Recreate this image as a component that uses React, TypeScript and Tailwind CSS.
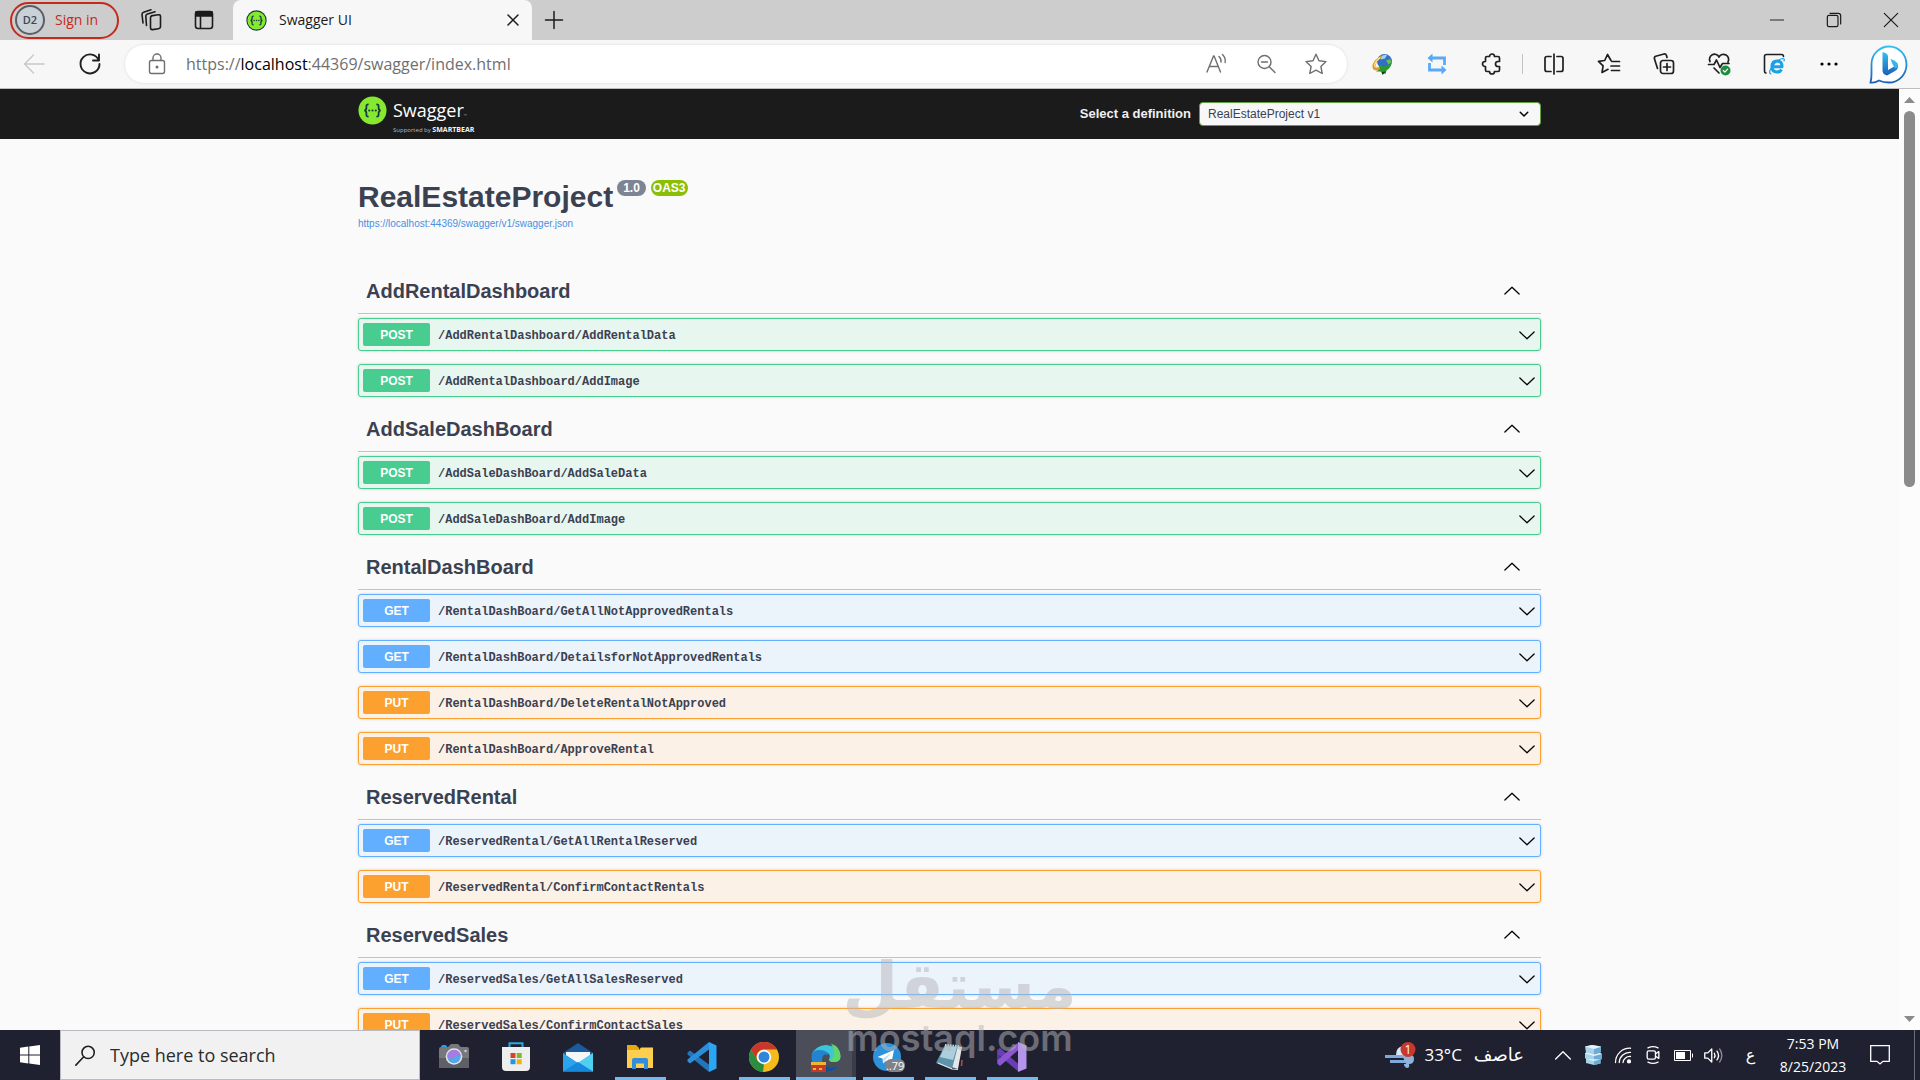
import { useState } from 'react'
import type { ReactNode } from 'react'
import clsx from 'clsx'

type Method = 'GET' | 'POST' | 'PUT'

interface Operation {
  method: Method
  path: string
}

interface Tag {
  name: string
  operations: Operation[]
}

const tags: Tag[] = [
  {
    name: 'AddRentalDashboard',
    operations: [
      { method: 'POST', path: '/AddRentalDashboard/AddRentalData' },
      { method: 'POST', path: '/AddRentalDashboard/AddImage' },
    ],
  },
  {
    name: 'AddSaleDashBoard',
    operations: [
      { method: 'POST', path: '/AddSaleDashBoard/AddSaleData' },
      { method: 'POST', path: '/AddSaleDashBoard/AddImage' },
    ],
  },
  {
    name: 'RentalDashBoard',
    operations: [
      { method: 'GET', path: '/RentalDashBoard/GetAllNotApprovedRentals' },
      { method: 'GET', path: '/RentalDashBoard/DetailsforNotApprovedRentals' },
      { method: 'PUT', path: '/RentalDashBoard/DeleteRentalNotApproved' },
      { method: 'PUT', path: '/RentalDashBoard/ApproveRental' },
    ],
  },
  {
    name: 'ReservedRental',
    operations: [
      { method: 'GET', path: '/ReservedRental/GetAllRentalReserved' },
      { method: 'PUT', path: '/ReservedRental/ConfirmContactRentals' },
    ],
  },
  {
    name: 'ReservedSales',
    operations: [
      { method: 'GET', path: '/ReservedSales/GetAllSalesReserved' },
      { method: 'PUT', path: '/ReservedSales/ConfirmContactSales' },
    ],
  },
]

const rowStyles: Record<Method, string> = {
  GET: 'border-[#61affe] bg-[#ebf3fb]',
  POST: 'border-[#49cc90] bg-[#e8f6f0]',
  PUT: 'border-[#fca130] bg-[#fbf1e6]',
}

const badgeStyles: Record<Method, string> = {
  GET: 'bg-[#61affe]',
  POST: 'bg-[#49cc90]',
  PUT: 'bg-[#fca130]',
}

function Icon({ size = 24, width = 1.4, className, children }: { size?: number; width?: number; className?: string; children: ReactNode }) {
  return (
    <svg
      width={size}
      height={size}
      viewBox="0 0 24 24"
      fill="none"
      stroke="currentColor"
      strokeWidth={width}
      strokeLinecap="round"
      strokeLinejoin="round"
      className={clsx('shrink-0', className)}
      aria-hidden="true"
    >
      {children}
    </svg>
  )
}

function SwaggerMark({ size, ring }: { size: number; ring?: boolean }) {
  return (
    <svg width={size} height={size} viewBox="0 0 30 30" fill="none" className="shrink-0" aria-hidden="true">
      <circle cx="15" cy="15" r="14.5" fill={ring ? '#173647' : '#85ea2d'} />
      {ring && <circle cx="15" cy="15" r="13" fill="#85ea2d" />}
      <path d="M11 8.6C8.8 8.6 8.6 9.6 8.7 11.4C8.9 13.8 8.4 14.8 6.6 15C8.4 15.2 8.9 16.2 8.7 18.6C8.6 20.4 8.8 21.4 11 21.4" stroke="#173647" strokeWidth="1.8" />
      <path d="M19 8.6C21.2 8.6 21.4 9.6 21.3 11.4C21.1 13.8 21.6 14.8 23.4 15C21.6 15.2 21.1 16.2 21.3 18.6C21.4 20.4 21.2 21.4 19 21.4" stroke="#173647" strokeWidth="1.8" />
      <circle cx="11.6" cy="15" r="1.1" fill="#173647" />
      <circle cx="15" cy="15" r="1.1" fill="#173647" />
      <circle cx="18.4" cy="15" r="1.1" fill="#173647" />
    </svg>
  )
}

function TitleBar() {
  return (
    <div className="flex h-10 shrink-0 items-stretch bg-[#cdcdcd] text-[#1b1b1b]">
      <div className="flex w-[233px] shrink-0 items-center pl-2.5">
        <button className="flex h-[37px] w-[109px] items-center rounded-full border-2 border-[#c42b1c] pl-[3px] text-sm text-[#c42b1c]">
          <span className="mr-2.5 flex size-[30px] shrink-0 items-center justify-center rounded-full border-2 border-[#5a5f66] bg-[#c9d0d6] text-[11px] font-semibold text-[#3c4650]">
            D2
          </span>
          Sign in
        </button>
        <button aria-label="Workspaces" className="ml-[20px]">
          <Icon width={1.6}>
            <rect x="11.5" y="7.5" width="10" height="14" rx="2" transform="skewY(-8) translate(0 2)" />
            <path d="M7.5 17.5L6.8 8.2C6.7 7 7.3 6.4 8.5 6L16 3.8" />
            <path d="M4 15L3 6.5C2.9 5.2 3.4 4.6 4.6 4.2L12 1.8" />
          </Icon>
        </button>
        <button aria-label="Tab actions" className="ml-[29px]">
          <Icon width={1.6}>
            <rect x="3.5" y="3.5" width="17" height="17" rx="2.5" />
            <path d="M4 4h16v4H4z" fill="currentColor" />
            <path d="M8.5 8v12" />
          </Icon>
        </button>
      </div>
      <div className="flex w-[299px] shrink-0 items-center rounded-t-lg bg-[#f7f7f7] pr-[9px] pl-[13px]">
        <SwaggerMark size={21} ring />
        <span className="ml-3 grow text-sm">Swagger UI</span>
        <button aria-label="Close tab">
          <Icon size={20} width={1.8}>
            <path d="M6 6l12 12M18 6L6 18" />
          </Icon>
        </button>
      </div>
      <button aria-label="New tab" className="ml-2.5">
        <Icon width={1.5}>
          <path d="M12 3.5v17M3.5 12h17" />
        </Icon>
      </button>
      <div className="ml-auto flex">
        <button aria-label="Minimize" className="flex w-[57px] items-center justify-center">
          <Icon size={16}>
            <path d="M2 12h20" />
          </Icon>
        </button>
        <button aria-label="Restore" className="flex w-[57px] items-center justify-center">
          <Icon size={16} width={1.8}>
            <rect x="2" y="5" width="16" height="17" rx="2.5" />
            <path d="M6 2h12.5Q22 2 22 5.500V18" />
          </Icon>
        </button>
        <button aria-label="Close" className="flex w-[58px] items-center justify-center">
          <Icon size={16} width={1.8}>
            <path d="M2 2l20 20M22 2L2 22" />
          </Icon>
        </button>
      </div>
    </div>
  )
}

function ToolButton({ label, children }: { label: string; children: ReactNode }) {
  return (
    <button aria-label={label} className="flex w-[55px] shrink-0 items-center justify-center">
      {children}
    </button>
  )
}

function AddressBar() {
  return (
    <div className="flex h-[49px] shrink-0 items-center border-b border-[#bdbdbd] bg-[#f7f7f7] text-[#1f1f1f]">
      <button aria-label="Back" className="ml-[22px] text-[#c8c8c8]">
        <Icon width={1.5}>
          <path d="M22 12H2.500M11.500 3L2.500 12l9 9" />
        </Icon>
      </button>
      <button aria-label="Refresh" className="ml-8">
        <Icon width={1.9}>
          <path d="M20.800 8.300A9.500 9.500 0 1 0 21.500 12M21 2.500v6h-6" />
        </Icon>
      </button>
      <div className="ml-[23px] flex h-[38px] grow items-center rounded-full bg-white pr-[19px] pl-5 text-[#6f6f6f] shadow-[0_0_3px_rgba(0,0,0,0.12)]">
        <Icon>
          <rect x="4.500" y="8.500" width="15" height="13" rx="2" />
          <path d="M8 8.500V6a4 4 0 0 1 8 0v2.500" />
          <circle cx="12" cy="15" r="0.8" fill="currentColor" />
        </Icon>
        <div className="relative ml-[17px] grow text-base">
          <span aria-hidden="true">
            https://<span className="text-black">localhost</span>:44369/swagger/index.html
          </span>
          <input
            aria-label="Address"
            className="absolute inset-0 w-full bg-transparent text-transparent outline-none"
            defaultValue="https://localhost:44369/swagger/index.html"
          />
        </div>
        <div className="flex gap-[26px]">
          <button aria-label="Read aloud">
            <Icon>
              <path d="M3 20L9.500 4h.6L16.500 20M5.500 14.500h9M15 4.500c1.700 1.500 2.300 3.300 2 5.500M18.500 2.500c2.300 2.300 3.200 5 2.600 8" />
            </Icon>
          </button>
          <button aria-label="Zoom out">
            <Icon>
              <circle cx="10.500" cy="10" r="6.500" />
              <path d="M15.500 15L21 20.500M7.500 10h6" />
            </Icon>
          </button>
          <button aria-label="Add to favorites">
            <Icon>
              <path d="M12 2.200l3 6.500 7 .9-5.100 4.900 1.300 7-6.200-3.400-6.200 3.400 1.300-7L2 9.600l7-.9z" />
            </Icon>
          </button>
        </div>
      </div>
      <div className="ml-[7px] flex h-full items-center">
        <ToolButton label="Download manager">
          <svg width="22" height="22" viewBox="0 0 22 22" aria-hidden="true">
            <circle cx="13.500" cy="8.500" r="7.500" fill="#2f6fc4" />
            <path d="M9 4.500q3-3.500 7-2.500l-2 3.500-4 1z" fill="#a9cff0" />
            <path d="M15 7.500l4-1.500 1.500 3-3 2.500z" fill="#6cc04a" />
            <path d="M10.500 2.500Q3.500 6 1.500 12q-1 5 4 5.500 3 0 6-1l-1-3q-6 2-6-1 1-5 6.500-8z" fill="#e8982a" />
            <path d="M9 4.500Q4.500 8 3.500 12q0 2.500 3 2" fill="none" stroke="#fbe08a" strokeWidth="1.200" />
            <path d="M8 11.500l4.500 2Q17 13.500 20.500 10q-.5 5-5 7.500l-1 3.500-5.500-2.500H5l4-2.500z" fill="#2f9a2c" />
            <path d="M10.500 19l4.500-.5-3.500 3.500z" fill="#123d12" />
          </svg>
        </ToolButton>
        <ToolButton label="Sync extension">
          <svg width="20" height="22" viewBox="0 0 20 22" fill="none" stroke="#5aa9f7" strokeWidth="2.800" aria-hidden="true">
            <path d="M4 5h13.500v7M2.500 10v7H16" />
            <path d="M5.500.500v9L.5 5zM14.500 12.500v9l5-4.500z" fill="#5aa9f7" stroke="none" />
          </svg>
        </ToolButton>
        <ToolButton label="Extensions">
          <Icon width={1.7}>
            <path d="M9.500 4.500a2.500 2.500 0 0 1 5 0H18q1.500 0 1.500 1.500v3.500H18a2.500 2.500 0 0 0 0 5h1.500V18q0 1.500-1.500 1.500h-3.500a2.500 2.500 0 0 1-5 0H7q-1.500 0-1.500-1.500v-3.500H5a2.500 2.500 0 0 1 0-5h.5V6q0-1.500 1.500-1.500z" />
          </Icon>
        </ToolButton>
        <div className="mr-[3px] ml-[3px] h-5 w-px bg-[#c4c4c4]" />
        <ToolButton label="Split screen">
          <Icon width={1.7}>
            <path d="M9 4.500H5Q3 4.500 3 6.500v11q0 2 2 2h4M15 4.500h4q2 0 2 2v11q0 2-2 2h-4M12 2v20" />
          </Icon>
        </ToolButton>
        <ToolButton label="Favorites">
          <Icon width={1.7}>
            <path d="M14 8.500L10.500 2.500 7.700 8.500 1.500 9.400l4.600 4.500L5 20.500l6-3.200M15 9.500h7.500M14 14h8.500M14.500 18.500h8" />
          </Icon>
        </ToolButton>
        <ToolButton label="Collections">
          <Icon width={1.7}>
            <rect x="8.500" y="8.500" width="13" height="13" rx="2.500" />
            <path d="M15 11.500v7M11.500 15h7M5.500 16.500L2.500 7q-.6-2 1.200-2.700L12 2q1.700-.5 2.500 1.500l.5 2" />
          </Icon>
        </ToolButton>
        <ToolButton label="Browser essentials">
          <Icon width={1.7}>
            <path d="M12 21L7 16M3 9.500A5 5 0 0 1 12 5a5 5 0 0 1 9 5M1.500 12.500h5.500l2.500-4.500 3.500 7.500 2.500-4h6.500" />
            <circle cx="18.500" cy="18.500" r="5" fill="#1e8e3e" stroke="none" />
            <path d="M16.300 18.500l1.600 1.600 2.700-3" stroke="#fff" strokeWidth="1.200" />
          </Icon>
        </ToolButton>
        <ToolButton label="Internet Explorer mode">
          <Icon width={1.6}>
            <path d="M4 21Q2.500 21 2.500 18.500V4.500Q2.500 2.500 4.500 2.500h15q2 0 2 2" />
            <path d="M10 14.800h10q0-5.800-5-5.800t-5 5.800q0 5.200 5 5.200 3.200 0 4.500-2.500" stroke="#1ba1e8" strokeWidth="3" strokeLinecap="butt" />
            <path d="M9 22q-3-1 .5-6.500 5-7.500 11-9 2.500 0 1.500 2.500" stroke="#1ba1e8" strokeWidth="1.200" />
          </Icon>
        </ToolButton>
        <ToolButton label="Settings and more">
          <svg width="18" height="4" viewBox="0 0 18 4" aria-hidden="true">
            <circle cx="2" cy="2" r="1.600" />
            <circle cx="9" cy="2" r="1.600" />
            <circle cx="16" cy="2" r="1.600" />
          </svg>
        </ToolButton>
        <button aria-label="Bing" className="mr-3 ml-3">
          <svg width="40" height="40" viewBox="0 0 40 40" fill="none" aria-hidden="true">
            <defs>
              <linearGradient id="bing" x1="0" y1="0" x2="0" y2="1">
                <stop offset="0" stopColor="#35c0f0" />
                <stop offset="1" stopColor="#1b5fb8" />
              </linearGradient>
            </defs>
            <path d="M2.500 38.500Q3.500 35 3.500 30V20A17.500 18 0 1 1 21 38.500Q15 38.500 11 36.500 7 39 2.500 38.500z" fill="#fff" stroke="url(#bing)" strokeWidth="1.800" />
            <path d="M14.500 8q5 1 5.500 4v14l7-4 3-1q.5 4-3 6l-8 4.500q-4.500-1-4.500-5z" fill="url(#bing)" />
            <path d="M22.500 15q7 2.500 7.500 5.500.5 3-3 4-3-4.500-4.500-9.500z" fill="#38b6e8" />
          </svg>
        </button>
      </div>
    </div>
  )
}

function Topbar() {
  return (
    <div className="h-[50px] bg-[#1b1b1b]">
      <div className="mx-auto flex h-full w-[1183px] max-w-full items-center justify-between">
        <a href="#" className="flex items-start pt-0.5 text-white">
          <SwaggerMark size={29} />
          <span className="ml-1.5 flex flex-col font-['Open_Sans',sans-serif]">
            <span className="pt-1 text-lg leading-5">
              Swagger<span className="text-[4px] text-gray-400">™</span>
            </span>
            <span className="text-[6px] leading-2 text-[#b8b8c0]">
              Supported by <b className="text-[7px] text-gray-100">SMARTBEAR</b>
            </span>
          </span>
        </a>
        <label className="flex items-center text-[13px] font-bold text-[#f0f0f0]">
          Select a definition
          <span className="relative ml-2">
            <select className="block h-6 w-[342px] appearance-none rounded-sm border border-[#62a03f] bg-[#f7f7f7] px-2 text-xs leading-5 font-normal text-[#3b4151]">
              <option>RealEstateProject v1</option>
            </select>
            <Icon size={10} width={3.500} className="pointer-events-none absolute top-[7px] right-3 text-black">
              <path d="M3 8l9 9 9-9" />
            </Icon>
          </span>
        </label>
      </div>
    </div>
  )
}

function TagSection({ tag }: { tag: Tag }) {
  const [open, setOpen] = useState(true)

  return (
    <section className="pb-2.5">
      <h3 className="mb-1 border-b border-[#c0c2c6]">
        <button className="flex h-11 w-full items-center justify-between pr-5 pl-2 text-xl font-bold" onClick={() => setOpen(!open)}>
          {tag.name}
          <Icon size={18} width={1.700} className={clsx('text-black', !open && 'rotate-180')}>
            <path d="M2.500 16L12 7l9.500 9" />
          </Icon>
        </button>
      </h3>
      {open && (
        <div className="flex flex-col gap-[13px]">
          {tag.operations.map((op) => (
            <button
              key={op.path}
              className={clsx('flex h-[33px] items-center rounded-[3px] border p-1 shadow-[0_0_3px_rgba(0,0,0,0.19)]', rowStyles[op.method])}
            >
              <span className={clsx('h-[23px] w-[67px] rounded-xs text-center text-xs leading-6 font-bold text-white', badgeStyles[op.method])}>
                {op.method}
              </span>
              <span className="ml-2 grow pt-0.5 text-left font-['Liberation_Mono',monospace] text-xs font-bold">{op.path}</span>
              <Icon size={18} width={1.700} className="text-black">
                <path d="M2.500 8L12 17l9.500-9" />
              </Icon>
            </button>
          ))}
        </div>
      )}
    </section>
  )
}

function SwaggerPage() {
  return (
    <div className="flex min-h-0 grow font-['Liberation_Sans',sans-serif]">
      <main className="min-w-0 grow overflow-hidden bg-[#fafafa] text-[#3b4151]">
        <Topbar />
        <div className="mx-auto w-[1183px] max-w-full pt-10">
          <div className="flex items-start pb-9">
            <div>
              <div className="flex items-start">
                <h2 className="text-3xl leading-9 font-bold">RealEstateProject</h2>
                <span className="mt-px ml-1 rounded-full bg-[#7d8492] px-1.5 text-xs leading-4 font-bold text-white">1.0</span>
                <span className="mt-px ml-[5px] rounded-full bg-[#89bf04] px-0.5 text-xs leading-4 font-bold text-white">OAS3</span>
              </div>
              <a href="#" className="block text-[10px] leading-[18px] text-[#4990e2]">
                https://localhost:44369/swagger/v1/swagger.json
              </a>
            </div>
          </div>
          {tags.map((tag) => (
            <TagSection key={tag.name} tag={tag} />
          ))}
        </div>
      </main>
      {/* Scrollbar */}
      <div className="flex w-[21px] shrink-0 flex-col items-center bg-[#fcfcfc] py-2 text-[#8b8b8b]">
        <svg width="11" height="6" viewBox="0 0 11 6" fill="currentColor" className="shrink-0" aria-hidden="true">
          <path d="M5.500 0L11 6H0z" />
        </svg>
        <div className="mt-2 h-[376px] w-[11px] rounded-full bg-[#8b8b8b]" />
        <svg width="11" height="6" viewBox="0 0 11 6" fill="currentColor" className="mt-auto shrink-0" aria-hidden="true">
          <path d="M0 0h11L5.500 6z" />
        </svg>
      </div>
    </div>
  )
}

interface TaskItem {
  label: string
  running?: boolean
  active?: boolean
  badge?: string
  icon: ReactNode
}

function AppIcon({ children }: { children: ReactNode }) {
  return (
    <svg width="30" height="30" viewBox="0 0 30 30" aria-hidden="true">
      {children}
    </svg>
  )
}

const taskItems: TaskItem[] = [
  {
    label: 'Camera',
    icon: (
      <AppIcon>
        <rect x="2" y="3" width="6" height="5" rx="2" fill="#2b9fe0" />
        <path d="M9 5l3-3h7l3 3h6q2 0 2 2v19H0V7q0-2 2-2z" fill="#77787d" />
        <path d="M0 16h30v10H0z" fill="#5f6066" />
        <circle cx="15" cy="14.500" r="8.300" fill="#e4e6ea" />
        <circle cx="15" cy="14.500" r="6.800" fill="#55a9ea" />
        <path d="M8.200 14.500a6.800 6.800 0 0 1 13.600 0q-5-2-7 1t-6.600-1z" fill="#a77be0" />
        <circle cx="26.500" cy="9" r="1.200" fill="#d0d0d0" />
      </AppIcon>
    ),
  },
  {
    label: 'Microsoft Store',
    icon: (
      <AppIcon>
        <path d="M8.500 6V1.200h13V6" fill="none" stroke="#2fa7e0" strokeWidth="2" />
        <path d="M1 5h28v20q0 4-4 4H5q-4 0-4-4z" fill="#eeeeee" />
        <path d="M9.500 11h5v5h-5z" fill="#d8402b" />
        <path d="M15.700 11h5v5h-5z" fill="#7db928" />
        <path d="M9.500 17.200h5v5h-5z" fill="#2196e3" />
        <path d="M15.700 17.200h5v5h-5z" fill="#eeb211" />
      </AppIcon>
    ),
  },
  {
    label: 'Mail',
    icon: (
      <AppIcon>
        <path d="M0 11L15 1l15 10v4H0z" fill="#1b5a9d" />
        <path d="M3 10h24v9L15 24 3 19z" fill="#f4f6f8" />
        <path d="M0 11l15 10 15-10v18.500H0z" fill="#2aa5ec" />
        <path d="M30 11v18.500L12.500 19.300 15 21z" fill="#4fd0f1" />
        <path d="M0 29.500L15 20l15 9.500z" fill="#1689dc" />
      </AppIcon>
    ),
  },
  {
    label: 'File Explorer',
    running: true,
    icon: (
      <AppIcon>
        <path d="M2 3h9l3 3v4H2z" fill="#e8a90e" />
        <path d="M2 8h12l2-2.500h12V26H2z" fill="#fccf4e" />
        <path d="M7 27V18q0-2 2-2h12q2 0 2 2v9h-4v-5.500h-8V27z" fill="#338ddb" />
      </AppIcon>
    ),
  },
  {
    label: 'Visual Studio Code',
    icon: (
      <AppIcon>
        <path d="M0.500 10.500L3 8.500l19 14V30L0.500 12.500z" fill="#2274bb" />
        <path d="M0.500 19.500L3 21.500 22 7.500V0L0.500 17.500z" fill="#2b8ddb" />
        <path d="M22 0l7.500 3.500v23L22 30z" fill="#2ba6f2" />
      </AppIcon>
    ),
  },
  {
    label: 'Google Chrome',
    running: true,
    icon: (
      <AppIcon>
        <circle cx="15" cy="15" r="15" fill="#f3bb1c" />
        <path d="M2 7.500L9 19l6 3.500L14 30A15 15 0 0 1 2 7.500z" fill="#2a8d40" />
        <path d="M2 7.500A15 15 0 0 1 28 7.500H15a7.500 7.500 0 0 0-6.500 11.300z" fill="#c8372b" />
        <circle cx="15" cy="15" r="7.200" fill="#fff" />
        <circle cx="15" cy="15" r="5.500" fill="#2f86dc" />
      </AppIcon>
    ),
  },
  {
    label: 'Microsoft Edge',
    running: true,
    active: true,
    icon: (
      <AppIcon>
        <path d="M0.500 13A15 14 0 0 1 29.500 14q0 6-6.500 6-6 0-5-3 2-3-1-6Q10 7 .5 13z" fill="#3ac5d8" />
        <path d="M20 1.500q9.500 3.500 9.500 12.500 0 6-6.500 6-3 0-4.500-1 8-6 1.500-17.500z" fill="#5fd76a" />
        <path d="M.5 15Q1 8 8 8q8 0 9.500 5-6-2-6.500 4 0 8 9 8.500 4 0 8-2.500Q24 30 15 30 1 29 .5 15z" fill="#2383d3" />
        <path d="M11 17q1 8 9 8.500 4 0 8-2.500-4 7-13 7z" fill="#134f93" />
        <path d="M0 20h15v10H0z" fill="#c43a27" />
        <path d="M0 20h15v3H0zM2 26h3v2H2zM8 26h3v2H8z" fill="#f0b52a" />
      </AppIcon>
    ),
  },
  {
    label: 'Telegram',
    running: true,
    badge: '..79',
    icon: (
      <AppIcon>
        <circle cx="14" cy="15" r="14" fill="#2d92da" />
        <path d="M4.500 15L21 8 18 23l-5-4-3 2.500-.5-5z" fill="#fff" />
        <path d="M10 16.500L18.500 10.500l-6 7.500-2 3.500z" fill="#c4dff0" />
      </AppIcon>
    ),
  },
  {
    label: 'Notepad',
    running: true,
    icon: (
      <AppIcon>
        <path d="M22 4l5 1-4 22-7-2z" fill="#e5e7e6" />
        <path d="M10 3l13 1-6 23-16-6z" fill="#5f93ab" />
        <path d="M10 4l12 1-4 13L5 15z" fill="#abd0dc" />
        <path d="M10 3l14 1" stroke="#d0d0d0" strokeWidth="2" strokeDasharray="1.500 1" />
        <path d="M3 21l14 6 6 .5" stroke="#e8e8e8" strokeWidth="1.200" fill="none" />
        <path d="M27 18l-.5 6" stroke="#c14a35" strokeWidth="1.500" />
      </AppIcon>
    ),
  },
  {
    label: 'Visual Studio',
    running: true,
    icon: (
      <AppIcon>
        <path d="M0 8l3-2v18l-3-2z" fill="#4b39a4" />
        <path d="M0.500 9L3 6l19 16.500V30L0.500 12z" fill="#6a3fb5" />
        <path d="M0.500 21L3 24 22 7.500V0L0.500 18z" fill="#8b56cf" />
        <path d="M21 0l8.500 3.500v23L21 30z" fill="#b595ec" />
      </AppIcon>
    ),
  },
]

function TrayIcon({ label, children }: { label: string; children: ReactNode }) {
  return (
    <button aria-label={label} className="flex w-[30px] shrink-0 items-center justify-center">
      {children}
    </button>
  )
}

function Taskbar() {
  return (
    <div className="flex h-[50px] shrink-0 items-stretch bg-[#1f2130] text-white">
      <button aria-label="Start" className="flex w-[60px] shrink-0 items-center justify-center">
        <svg width="20" height="20" viewBox="0 0 20 20" fill="currentColor" aria-hidden="true">
          <path d="M0 2.800l8.300-1.200v7.900H0zM9.300 1.400L20 0v9.500H9.300zM0 10.500h8.300v7.900L0 17.200zM9.300 10.500H20V20L9.300 18.600z" />
        </svg>
      </button>
      <label className="flex w-[360px] shrink-0 items-center border border-[#b9bac0] bg-[#f1f1f1] pl-3.5 text-[#1f1f1f]">
        <Icon size={21} width={1.8}>
          <circle cx="15" cy="8.500" r="7" />
          <path d="M10 13.500L1 23" />
        </Icon>
        <input
          aria-label="Search"
          placeholder="Type here to search"
          className="ml-3.5 w-[280px] bg-transparent text-lg outline-none placeholder:text-[#2b2b2b]"
        />
      </label>
      <div className="ml-[3px] flex">
        {taskItems.map((item) => (
          <button
            key={item.label}
            aria-label={item.label}
            className="relative flex w-[62px] shrink-0 flex-col items-center"
          >
            <span
              className={clsx('flex w-[60px] grow items-center justify-center pt-1.5', item.active && 'border-r-4 border-[#3a3c49] bg-[#4b4d59] pl-1')}
            >
              {item.icon}
            </span>
            <span
              className={clsx('h-[3px]', item.active ? 'w-[60px]' : 'w-[51px]', item.running ? 'bg-[#76b9ed]' : 'bg-transparent')}
            />
            {item.badge && (
              <span className="absolute top-[29px] left-[28px] rounded-md bg-[#808287] px-px text-[11px] leading-[13px]">{item.badge}</span>
            )}
          </button>
        ))}
      </div>
      <div className="ml-auto flex items-center">
        <button className="flex items-center">
          <svg width="31" height="26" viewBox="0 0 31 26" fill="none" className="mr-2" aria-hidden="true">
            <path d="M0 14.500h21M5 19.500h18" stroke="#7fa8dc" strokeWidth="3" />
            <path d="M11 13q0-8 7-9l8 9z" fill="#dbe7f5" />
            <path d="M17 13h6q6-1 6 4t-5 5q1 4-2 4-3-1-3-4h2z" fill="#8fb2dd" />
            <circle cx="23" cy="7.500" r="7.500" fill="#c8382c" />
            <text x="23" y="12" textAnchor="middle" fontSize="12" fill="#fff">1</text>
          </svg>
          <span className="text-[17px]">33°C</span>
          <span className="ml-3 font-['DejaVu_Sans',sans-serif] text-lg" dir="rtl">عاصف</span>
        </button>
        <div className="ml-6 flex">
          <TrayIcon label="Show hidden icons">
            <Icon size={16} width={2}>
              <path d="M1 18L12 7l11 11" />
            </Icon>
          </TrayIcon>
          <TrayIcon label="Storage">
            <svg width="18" height="20" viewBox="0 0 18 20" aria-hidden="true">
              <path d="M1 1.500L8 0l9 1.500v5L16 8l2 1.500v4L16.500 15v3.500L10 20l-8-2v-4l-1-1V8.500l1-1z" fill="#a6d3ea" />
              <path d="M10 4l7-2v4.500L16 8l2 1.500v4L16.500 15v3.500L10 20z" fill="#6aacd4" />
              <path d="M1 1.500L8 0l9 1.500L10 4zM1 8.500l9 2.500 8-2-2-1-6 1.500-8-2zM2 14l8 2 6.500-1.500" fill="#e6f4fa" />
            </svg>
          </TrayIcon>
          <TrayIcon label="Network">
            <Icon size={18} width={1.700}>
              <path d="M2 22A19 19 0 0 1 22 3M7 22A14 14 0 0 1 22 8.500M12 22A9 9 0 0 1 22 14" />
              <circle cx="20" cy="20.500" r="2" fill="currentColor" />
            </Icon>
          </TrayIcon>
          <TrayIcon label="Meet now">
            <Icon size={20} width={1.600}>
              <rect x="5" y="7" width="10" height="10" rx="2" />
              <path d="M15 10.500l4-2.500v8l-4-2.500M6 3.500q6-3 12 0M6 20.500q6 3 12 0" />
            </Icon>
          </TrayIcon>
          <TrayIcon label="Battery">
            <svg width="19" height="11" viewBox="0 0 19 11" fill="none" stroke="#fff" aria-hidden="true">
              <path d="M.5.500h16v10H.5zM18.500 3.500v4" />
              <path d="M2 2h9v7H2z" fill="#fff" stroke="none" />
            </svg>
          </TrayIcon>
          <TrayIcon label="Volume">
            <Icon size={21} width={1.500}>
              <path d="M2 9h3.500L10 4.500v15L5.500 15H2zM13 9.500q1.500 2.500 0 5M16 7q3.500 5 0 10" />
              <path d="M19 4.500q5 7.500 0 15" opacity="0.5" />
            </Icon>
          </TrayIcon>
        </div>
        <button aria-label="Input language" className="ml-[15px] w-[15px] font-['DejaVu_Sans',sans-serif] text-base">ع</button>
        <button className="ml-2.5 w-[90px] text-center text-sm leading-[23px]">
          7:53 PM
          <br />
          8/25/2023
        </button>
        <button aria-label="Notifications" className="ml-3">
          <svg width="20" height="20" viewBox="0 0 20 20" fill="none" stroke="#fff" strokeWidth="1.300" aria-hidden="true">
            <path d="M.7.700h18.600v15.600H13L10 19l-3-2.700H.7z" />
          </svg>
        </button>
        <div className="mr-[5px] ml-6 h-[50px] w-px bg-[#6c6e78]" />
      </div>
    </div>
  )
}

// Stamp that floats over the page and the taskbar
function Watermark() {
  return (
    <div className="pointer-events-none absolute bottom-6 left-[845px] flex w-[229px] flex-col items-center text-[#b7b7ba] opacity-50">
      <span className="font-['DejaVu_Sans',sans-serif] text-[64px] leading-[68px] font-bold" dir="rtl">مستقل</span>
      <span className="font-['Inter',sans-serif] text-4xl leading-9 font-semibold">mostaql.com</span>
    </div>
  )
}

export default function App() {
  return (
    <div className="relative flex h-screen flex-col overflow-hidden font-['Open_Sans',sans-serif]">
      <TitleBar />
      <AddressBar />
      <SwaggerPage />
      <Taskbar />
      <Watermark />
    </div>
  )
}
